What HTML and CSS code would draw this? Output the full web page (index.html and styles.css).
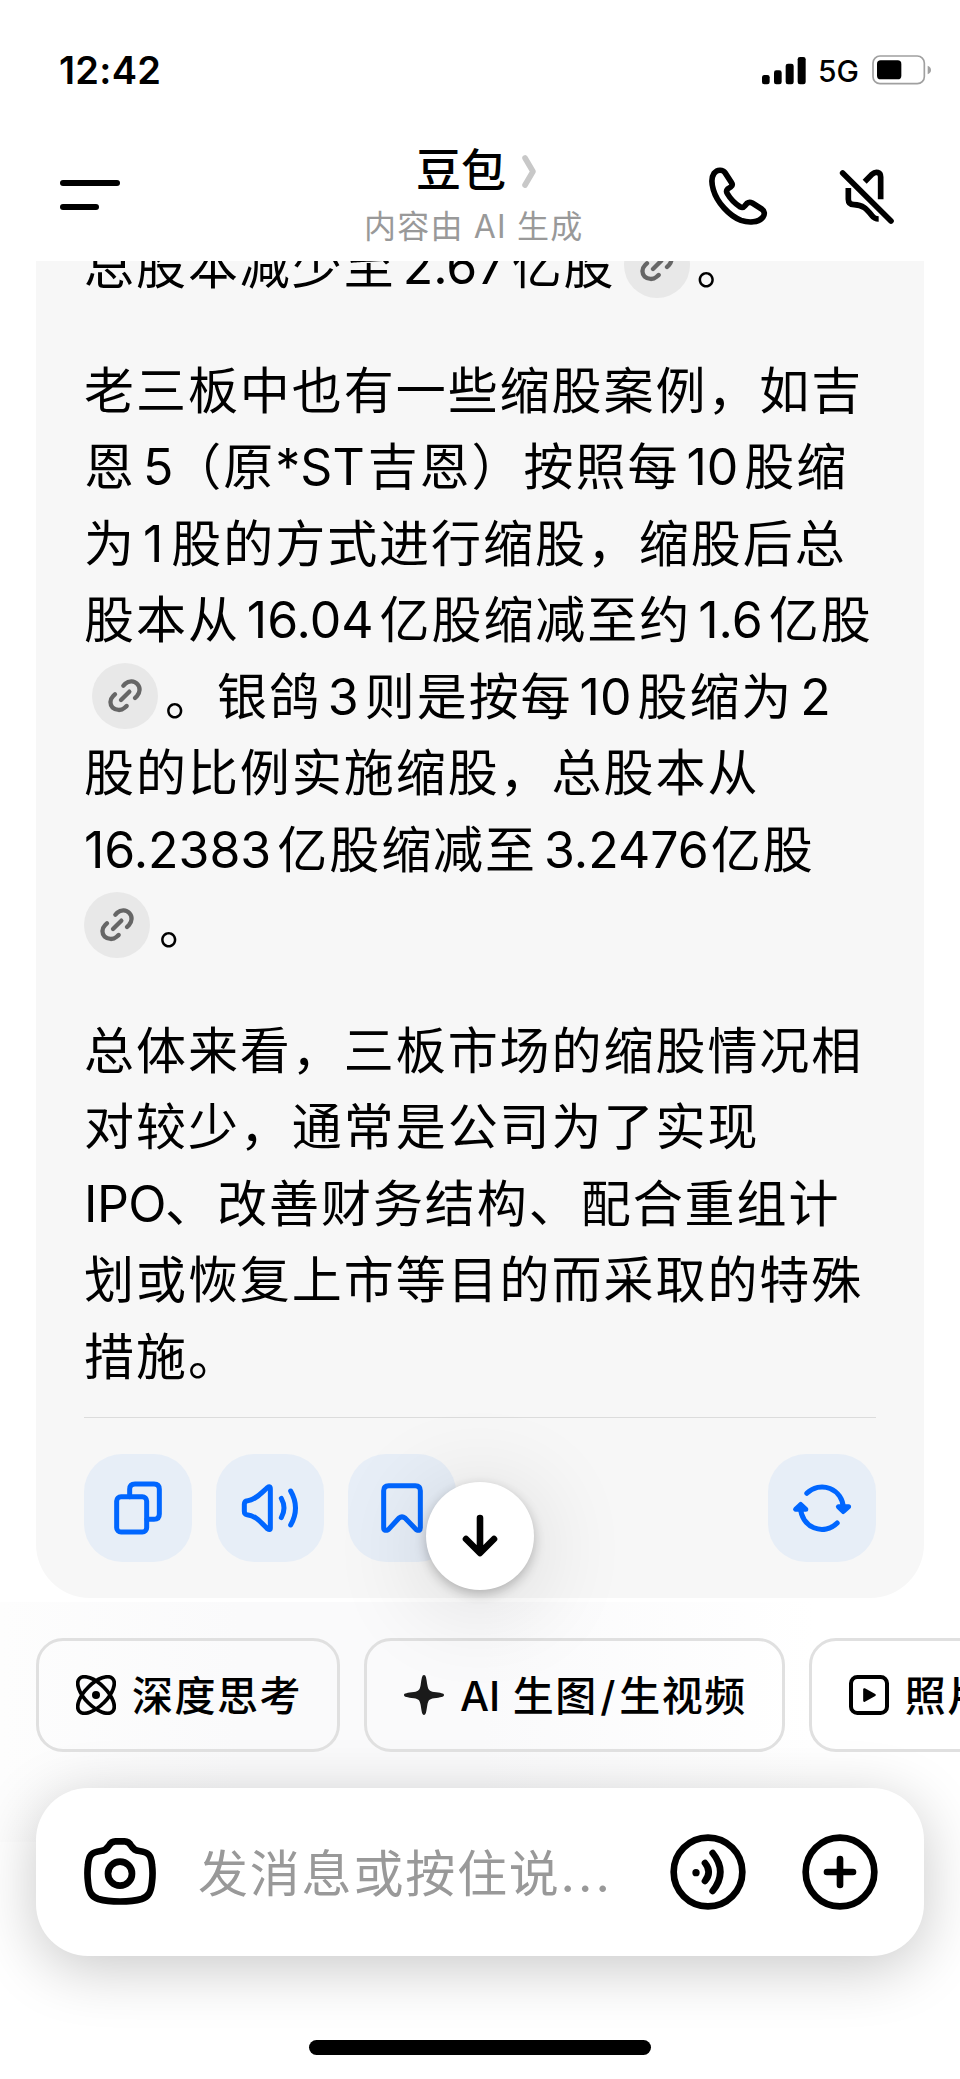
FILE: index.html
```
<!DOCTYPE html>
<html lang="zh-CN">
<head>
  <meta charset="utf-8">
  <title>豆包</title>
  <link rel="stylesheet" href="styles.css">
</head>
<body>
  <header class="top">
    <div class="status">
      <span class="time">12:42</span>
      <svg class="signal" viewBox="846 76 132 87">
        <rect x="846" y="133" width="23" height="28" rx="7"/>
        <rect x="882" y="119" width="23" height="42" rx="7"/>
        <rect x="917" y="99" width="24" height="62" rx="7"/>
        <rect x="953" y="79" width="24" height="82" rx="7"/>
      </svg>
      <span class="network">5G</span>
      <svg class="battery" viewBox="1176 75 180 90">
        <rect x="1179" y="78" width="154" height="83" rx="21" fill="none" stroke="#a0a0a0" stroke-width="5"/>
        <rect x="1191" y="91" width="73" height="57" rx="11"/>
        <path d="M1343 107 Q1353 111 1353 120 Q1353 129 1343 133Z" fill="#a0a0a0"/>
      </svg>
    </div>
    <nav class="nav">
      <div class="menu"><span></span><span></span></div>
      <div class="heading">
        <h1>豆包
          <svg class="chevron" viewBox="124 371 42 100"><path d="M133 380 L157 421 L133 462"/></svg>
        </h1>
        <p>内容由 AI 生成</p>
      </div>
      <svg class="nav-icon" viewBox="684 408 180 180">
        <path d="M702 430 C712 418 728 418 735 428 L754 457 C758 463 756 468 752 471 L743 477 C739 481 739 486 742 491 C752 508 768 523 781 531 C787 534 791 532 795 527 L801 520 C806 516 811 516 817 519 L845 537 C854 543 855 553 849 561 C836 578 806 579 783 571 C747 557 711 517 700 479 C694 459 694 442 702 430Z"/>
      </svg>
      <svg class="nav-icon" viewBox="1074 408 180 180">
        <path stroke-linecap="round" d="M1088 429 L1233 573"/>
        <path d="M1154 455 L1176 433 C1188 422 1202 427 1202 441 V508 M1105 474 V508 C1105 520 1112 524 1122 524 C1150 524 1162 540 1175 556 C1181 564 1188 567 1196 567"/>
      </svg>
    </nav>
  </header>

  <svg class="defs">
    <symbol id="link" viewBox="252 756 198 198">
      <path d="M346 824 L352 818 C363 808 379 809 388 819 C398 829 396 845 387 855 L381 861 M321 850 L315 856 C305 866 305 881 314 890 C324 899 340 899 349 891 L356 885 M339 867 L364 842"/>
    </symbol>
  </svg>

  <main class="chat">
    <article class="card">
      <p>总股本减少至<span class="num">2.67</span>亿股<svg class="ref gap"><use href="#link"/></svg>。</p>
      <p>
        老三板中也有一些缩股案例，如吉<br>
        恩<span class="num before-paren">5</span>（原<span class="num code">*ST</span>吉恩）按照每<span class="num">10</span>股缩<br>
        为<span class="num one">1</span>股的方式进行缩股，缩股后总<br>
        股本从<span class="num">16.04</span>亿股缩减至约<span class="num">1.6</span>亿股<br>
        <svg class="ref gap"><use href="#link"/></svg>。银鸽<span class="num">3</span>则是按每<span class="num">10</span>股缩为<span class="num">2</span><br>
        股的比例实施缩股，总股本从<br>
        <span class="num first">16.2383</span>亿股缩减至<span class="num long">3.2476</span>亿股<br>
        <svg class="ref"><use href="#link"/></svg>。
      </p>
      <p>
        总体来看，三板市场的缩股情况相<br>
        对较少，通常是公司为了实现<br>
        <span class="ipo">IPO</span>、改善财务结构、配合重组计<br>
        划或恢复上市等目的而采取的特殊<br>
        措施。
      </p>
      <div class="actions">
        <button class="action">
          <svg viewBox="252 162 324 324"><rect x="350" y="290" width="90" height="106" rx="13"/><path d="M389 290 V268 Q389 252 405 252 H462 Q478 252 478 268 V342 Q478 358 462 358 H441"/></svg>
        </button>
        <button class="action">
          <svg viewBox="648 162 324 324"><path d="M811 266 V384 Q811 392 802 386 C782 366 765 346 741 344 Q733 343 733 334 V313 Q733 303 743 302 C765 300 782 281 802 263 Q811 256 811 266Z M844 295 Q860 324 844 353 M872 273 Q901 324 872 375"/></svg>
        </button>
        <button class="action">
          <svg viewBox="1044 162 324 324"><path d="M1151 272 Q1151 257 1166 257 H1246 Q1261 257 1261 272 V383 Q1261 395 1249 389 L1215 354 Q1206 347 1197 354 L1165 389 Q1151 395 1151 383Z"/></svg>
        </button>
        <button class="action refresh">
          <svg viewBox="768 1454 108 108"><path d="M806.8 1493.3 A21.3 21.3 0 0 1 843.3 1508 M837.2 1523 A21.3 21.3 0 0 1 800.7 1508"/><path fill="#06f" d="M838.4 1506.7 H848.6 L843.3 1511.5Z M795.6 1509.3 H805.8 L800.7 1504.5Z"/></svg>
        </button>
      </div>
    </article>
    <button class="to-bottom">
      <svg viewBox="426 1482 108 108"><path d="M480 1518 V1552 M466 1539 L480 1553 L494 1539"/></svg>
    </button>
  </main>

  <footer class="composer">
    <div class="chips">
      <div class="chip">
        <svg viewBox="228 165 120 120">
          <g fill="none" stroke="#000" stroke-width="11">
            <ellipse cx="288" cy="225" rx="70" ry="33" transform="rotate(45 288 225)"/>
            <ellipse cx="288" cy="225" rx="70" ry="33" transform="rotate(-45 288 225)"/>
          </g>
          <circle cx="288" cy="225" r="12"/>
        </svg>
        <span>深度思考</span>
      </div>
      <div class="chip">
        <svg viewBox="1212 165 120 120"><path fill="#1a1a1a" d="M1272 165 C1278 165 1279 175 1282 195 C1285 211 1288 213 1302 216 C1322 219 1332 219 1332 225 C1332 231 1322 232 1302 235 C1288 238 1285 240 1282 255 C1279 275 1278 285 1272 285 C1266 285 1265 275 1262 255 C1259 240 1256 238 1242 235 C1222 232 1212 231 1212 225 C1212 219 1222 219 1242 216 C1256 213 1259 211 1262 195 C1265 175 1266 165 1272 165Z"/></svg>
        <span><b>AI</b> 生图<i>/</i>生视频</span>
      </div>
      <div class="chip">
        <svg viewBox="1107 165 120 120"><rect x="1113" y="171" width="108" height="108" rx="19" fill="none" stroke="#000" stroke-width="12"/><path d="M1153 208 L1184 225 L1153 242Z" stroke="#000" stroke-width="7" stroke-linejoin="round"/></svg>
        <span>照片</span>
      </div>
    </div>
    <div class="input">
      <svg class="camera" viewBox="252 648 216 216">
        <path d="M346 664 H374 C385 664 389 669 394 678 C400 688 406 692 418 693 C445 696 454 706 456 735 C458 750 458 770 456 786 C453 818 445 830 425 837 C390 847 330 847 295 837 C275 830 267 818 264 786 C262 770 262 750 264 735 C266 706 275 696 302 693 C314 692 320 688 326 678 C331 669 335 664 346 664Z"/>
        <circle cx="360" cy="761" r="36"/>
      </svg>
      <span class="placeholder">发消息或按住说<i>...</i></span>
      <svg class="round" viewBox="570 642 228 228">
        <circle cx="684" cy="756" r="103"/>
        <path d="M675 729 Q697 756 675 783 M698 699 Q744 756 698 813"/>
        <circle cx="648" cy="758" r="11" class="dot"/>
      </svg>
      <svg class="round" viewBox="966 642 228 228">
        <circle cx="1080" cy="756" r="103"/>
        <path d="M1041 756 H1119 M1080 717 V795"/>
      </svg>
    </div>
    <div class="home-bar"></div>
  </footer>
</body>
</html>
```
FILE: styles.css
```
* {
  box-sizing: border-box;
}

body {
  margin: 0;
  width: 960px;
  height: 2079px;
  display: flex;
  flex-direction: column;
  overflow: hidden;
  background: #fff;
  color: #000;
  font-family: Inter, "Noto Sans CJK SC", sans-serif;
  text-autospace: no-autospace;
}

svg {
  display: block;
  flex: none;
}

p, h1 {
  margin: 0;
}

i {
  font-style: normal;
}

button {
  border: 0;
  padding: 0;
}

.defs {
  width: 0;
  height: 0;
  position: absolute;
}

/* status bar + nav */
.top {
  height: 261px;
  flex: none;
  background: #fff;
}

.status {
  height: 140px;
  padding: 0 28px 0 59px;
  display: flex;
  align-items: center;
}

.time {
  font-size: 38px;
  font-weight: 600;
  letter-spacing: .3px;
  margin-right: auto;
}

.signal {
  width: 44px;
  height: 29px;
}

.network {
  font-size: 30px;
  font-weight: 500;
  margin: 2px 13px 0 12px;
}

.battery {
  width: 60px;
  height: 30px;
}

.nav {
  height: 121px;
  padding: 0 62px 0 60px;
  display: flex;
  align-items: flex-start;
}

.menu {
  width: 60px;
  flex: none;
  margin-top: 40px;
  display: flex;
  flex-direction: column;
  gap: 18px;
}

.menu span {
  height: 6px;
  border-radius: 3px;
  background: #000;
}

.menu span:last-child {
  width: 39px;
}

.heading {
  width: 240px;
  flex: none;
  margin: 0 114px 0 234px;
}

.heading h1 {
  padding-left: 62px;
  display: flex;
  align-items: center;
  gap: 16px;
  font-size: 45px;
  font-weight: 500;
  line-height: 62px;
}

.chevron {
  width: 14px;
  height: 33px;
  fill: none;
  stroke: #c8c8c8;
  stroke-width: 17;
  stroke-linecap: round;
  stroke-linejoin: round;
}

.heading p {
  padding-left: 10px;
  font-size: 32px;
  line-height: 50px;
  letter-spacing: 1.2px;
  color: #999;
  white-space: nowrap;
}

.nav-icon {
  width: 60px;
  height: 60px;
  margin: 26px 0 0;
  fill: none;
  stroke: #000;
  stroke-width: 17;
}

.nav-icon + .nav-icon {
  margin-left: 70px;
}

/* message */
.chat {
  position: relative;
  z-index: 2;
  height: 1341px;
  flex: none;
}

.card {
  height: 1337px;
  margin: 0 36px;
  padding: 0 48px 36px;
  border-radius: 0 0 54px 54px;
  background: #f7f7f7;
  overflow: hidden;
  display: flex;
  flex-direction: column;
  justify-content: flex-end;
}

.card p {
  margin-bottom: 48px;
  font-size: 50px;
  line-height: 76.5px;
  letter-spacing: 1.95px;
  white-space: nowrap;
}

.card p:last-of-type {
  margin-bottom: 22px;
}

.num {
  margin: 0 6px 0 7px;
  letter-spacing: 0;
}

.num.one {
  margin-right: 8px;
}

.num.long {
  margin-right: 2px;
}

.num.first {
  margin-left: 0;
}

.num.before-paren {
  margin: 0 -2px 0 7px;
}

.num.code {
  margin: 0 3px 0 0;
}

.ipo {
  letter-spacing: -.5px;
  margin-right: -1px;
}

.ref {
  display: inline-block;
  width: 66px;
  height: 66px;
  margin: -20px 9px -20px 0;
  border-radius: 50%;
  background: #e8e8e8;
  vertical-align: 6px;
  fill: none;
  stroke: #666;
  stroke-width: 13;
  stroke-linecap: round;
}

.ref.gap {
  margin-left: 8px;
  margin-right: 7px;
}

.actions {
  border-top: 1px solid #dcdcdc;
  padding-top: 36px;
  display: flex;
  gap: 24px;
}

.action {
  width: 108px;
  height: 108px;
  border-radius: 38px;
  background: #e7eef7;
}

.action svg {
  width: 108px;
  height: 108px;
  fill: none;
  stroke: #06f;
  stroke-width: 15;
  stroke-linecap: round;
  stroke-linejoin: round;
}

.refresh {
  margin-left: auto;
}

.refresh svg {
  stroke-width: 5;
}

.to-bottom {
  position: absolute;
  left: 426px;
  bottom: 12px;
  width: 108px;
  height: 108px;
  border-radius: 50%;
  background: #fff;
  box-shadow: 0 4px 12px rgba(0, 0, 0, .24), 0 12px 100px rgba(0, 0, 0, .16);
}

.to-bottom svg {
  width: 108px;
  height: 108px;
  fill: none;
  stroke: #000;
  stroke-width: 6.6;
  stroke-linecap: round;
  stroke-linejoin: round;
}

/* bottom area */
.composer {
  flex: 1;
  padding: 36px 36px 0;
  background: linear-gradient(90deg, #fdfdfd, #fafafb 25%, #fafafb 50%, #fff 85%);
  background-size: 100% 240px;
  background-repeat: no-repeat;
}

.chips {
  display: flex;
  gap: 24px;
  margin-right: -36px;
  overflow: hidden;
  white-space: nowrap;
}

.chip {
  height: 114px;
  flex: none;
  padding: 0 35px 0 37px;
  border: 3px solid #e0e0e0;
  border-radius: 27px;
  display: flex;
  align-items: center;
  gap: 16px;
  font-size: 41px;
  font-weight: 500;
  letter-spacing: 1.5px;
}

.chip span {
  margin-top: -5px;
}

.chip svg {
  width: 40px;
  height: 40px;
}

.chip b {
  font-weight: 500;
  letter-spacing: 0;
}

.chip i {
  margin: 0 2.5px;
}

.input {
  height: 168px;
  margin-top: 36px;
  padding: 0 46px 0 48px;
  border-radius: 52px;
  background: #fff;
  box-shadow: 0 12px 60px rgba(0, 0, 0, .22);
  display: flex;
  align-items: center;
}

.camera {
  width: 72px;
  height: 72px;
  fill: none;
  stroke: #000;
  stroke-width: 20;
}

.placeholder {
  flex: 1;
  margin: -5px 0 0 42px;
  font-size: 50px;
  letter-spacing: 1.8px;
  color: #999;
}

.placeholder i {
  letter-spacing: 3px;
}

.round {
  width: 76px;
  height: 76px;
  fill: none;
  stroke: #000;
  stroke-width: 20;
  stroke-linecap: round;
}

.round + .round {
  margin-left: 56px;
}

.round .dot {
  fill: #000;
  stroke: none;
}

.home-bar {
  width: 342px;
  height: 15px;
  margin: 84px auto 0;
  border-radius: 8px;
  background: #000;
}
```
